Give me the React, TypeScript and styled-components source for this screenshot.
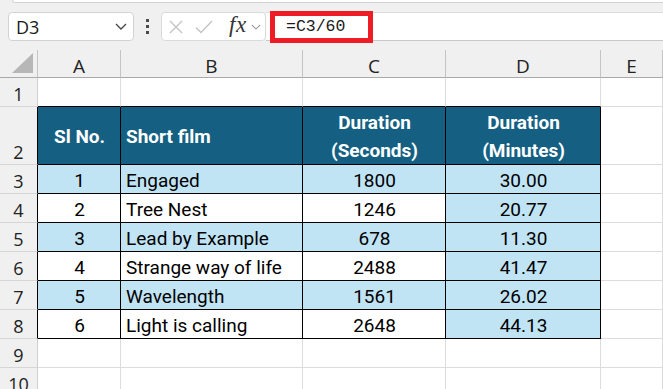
import React from 'react';
import styled, { createGlobalStyle } from 'styled-components';

const GlobalStyle = createGlobalStyle`
  html, body {
    margin: 0;
    padding: 0;
    background: #f0f0f0;
    overflow: hidden;
  }
  #root {
    width: 663px;
    height: 389px;
    overflow: hidden;
  }
`;

const HEAD_BLUE = '#156082';
const LIGHT_BLUE = '#c1e4f5';
const GRID = '#dcdcdc';
const HDR_LINE = '#c4c4c4';

const Window = styled.div`
  width: 663px;
  height: 389px;
  overflow: hidden;
  display: flex;
  flex-direction: column;
  background: #f0f0f0;
  font-family: Roboto, 'Liberation Sans', sans-serif;
  & > * {
    flex-shrink: 0;
  }
`;

const RibbonEdge = styled.div`
  height: 2px;
  margin-left: 12px;
  background: #ffffff;
  border-bottom: 1px solid #d2d2d2;
  border-left: 1px solid #d2d2d2;
  border-bottom-left-radius: 4px;
`;

const FormulaBar = styled.div`
  display: flex;
  align-items: center;
  height: 29px;
  padding: 9px 0 9px 8px;
`;

const NameBox = styled.div`
  width: 126px;
  height: 29px;
  box-sizing: border-box;
  display: flex;
  align-items: center;
  justify-content: space-between;
  padding: 0 6px 0 7px;
  background: #fff;
  border: 1px solid #d3d3d3;
  border-radius: 4px;
  font-family: 'Open Sans', 'Noto Sans', sans-serif;
  font-size: 18px;
  color: #1a1a1a;
`;

const Grip = styled.div`
  width: 27px;
  display: flex;
  flex-direction: column;
  align-items: center;
  gap: 2.5px;
  span {
    width: 3.5px;
    height: 3.5px;
    background: #4a4a4a;
  }
`;

const FxBox = styled.div`
  width: 105px;
  height: 29px;
  box-sizing: border-box;
  display: flex;
  align-items: center;
  padding-left: 6px;
  background: #fff;
  border: 1px solid #dadada;
  border-radius: 4px;
`;

const FxLabel = styled.span`
  font-family: 'Liberation Serif', serif;
  font-style: italic;
  font-size: 23px;
  color: #333;
  margin: -3px 4px 0 16px;
  letter-spacing: 0.5px;
`;

const FormulaField = styled.div`
  position: relative;
  flex: 1;
  height: 29px;
  box-sizing: border-box;
  display: flex;
  align-items: center;
  padding-left: 20px;
  background: #fff;
  border-top: 1px solid #dcdcdc;
  border-bottom: 1px solid #c8c8c8;
  font-family: 'Liberation Mono', 'DejaVu Sans Mono', monospace;
  font-size: 16.5px;
  color: #1a1a1a;
`;

const Highlight = styled.div`
  position: absolute;
  left: 4px;
  top: -2px;
  width: 103px;
  height: 32px;
  box-sizing: border-box;
  border: 5px solid #ee1c25;
`;

const Sheet = styled.div`
  display: grid;
  grid-template-columns: 38px 83px 182px 143px 155px 1fr;
  grid-template-rows: 28px 29px 58px repeat(8, 29px);
  background: #fff;
`;

const ColHead = styled.div`
  display: flex;
  align-items: center;
  justify-content: center;
  padding-top: 4px;
  box-sizing: border-box;
  background: #f0f0f0;
  border-right: 1px solid ${HDR_LINE};
  border-bottom: 1px solid #a9a9a9;
  font-family: 'Open Sans', 'Noto Sans', sans-serif;
  font-size: 19px;
  color: #222;
`;

const Corner = styled.div`
  display: flex;
  align-items: flex-end;
  justify-content: flex-end;
  padding: 0 4px 4px 0;
  box-sizing: border-box;
  background: #f0f0f0;
  border-right: 1px solid ${HDR_LINE};
  border-bottom: 1px solid #a9a9a9;
`;

const RowHead = styled.div<{ $edge?: boolean }>`
  display: flex;
  align-items: flex-end;
  justify-content: center;
  padding-bottom: 0;
  box-sizing: border-box;
  background: #f0f0f0;
  border-right: 1px solid ${({ $edge }) => ($edge ? '#000' : '#cfcfcf')};
  border-bottom: 1px solid #d6d6d6;
  font-family: 'Open Sans', 'Noto Sans', sans-serif;
  font-size: 18px;
  color: #222;
`;

type Fill = 'head' | 'blue' | 'none';

const Cell = styled.div<{
  $fill?: Fill;
  $align?: 'left' | 'center';
  $table?: boolean;
  $topEdge?: boolean;
}>`
  display: flex;
  align-items: flex-end;
  justify-content: ${({ $align }) => ($align === 'left' ? 'flex-start' : 'center')};
  padding: 0 4px 3px 5px;
  box-sizing: border-box;
  white-space: nowrap;
  font-size: 19px;
  line-height: 19px;
  color: #000;
  background: ${({ $fill }) =>
    $fill === 'head' ? HEAD_BLUE : $fill === 'blue' ? LIGHT_BLUE : '#fff'};
  border-right: 1px solid ${({ $table }) => ($table ? '#000' : GRID)};
  border-bottom: 1px solid ${({ $table, $topEdge }) => ($table || $topEdge ? '#000' : GRID)};
`;

const HeadCell = styled(Cell)`
  align-items: center;
  padding-bottom: 0;
  padding-top: 3px;
  color: #fff;
  font-weight: 700;
  text-align: center;
  line-height: 28px;
  white-space: normal;
`;

const rows = [
  [1, 'Engaged', 1800, '30.00'],
  [2, 'Tree Nest', 1246, '20.77'],
  [3, 'Lead by Example', 678, '11.30'],
  [4, 'Strange way of life', 2488, '41.47'],
  [5, 'Wavelength', 1561, '26.02'],
  [6, 'Light is calling', 2648, '44.13'],
];

const Chevron = ({ size = 12, color = '#444' }: { size?: number; color?: string }) => (
  <svg width={size} height={size / 2 + 1} viewBox="0 0 12 7" fill="none">
    <path d="M1 1l5 5 5-5" stroke={color} strokeWidth="1.3" />
  </svg>
);

const CancelIcon = () => (
  <svg width="16" height="16" viewBox="0 0 16 16" fill="none">
    <path d="M2 2l12 12M14 2L2 14" stroke="#c2c2c2" strokeWidth="1.3" />
  </svg>
);

const CheckIcon = () => (
  <svg width="18" height="16" viewBox="0 0 18 16" fill="none" style={{ marginLeft: 11 }}>
    <path d="M1 8.5l5 5L17 2" stroke="#c2c2c2" strokeWidth="1.3" />
  </svg>
);

const SelectAll = () => (
  <svg width="21" height="20" viewBox="0 0 21 20">
    <polygon points="21,0 21,20 0,20" fill="#b7b7b7" />
  </svg>
);

export default function App() {
  const letters = ['A', 'B', 'C', 'D', 'E'];
  return (
    <>
      <GlobalStyle />
      <Window>
        <RibbonEdge />
        <FormulaBar>
          <NameBox>
            D3
            <Chevron />
          </NameBox>
          <Grip>
            <span />
            <span />
            <span />
          </Grip>
          <FxBox>
            <CancelIcon />
            <CheckIcon />
            <FxLabel>fx</FxLabel>
            <Chevron size={10} color="#9a9a9a" />
          </FxBox>
          <FormulaField>
            =C3/60
            <Highlight />
          </FormulaField>
        </FormulaBar>

        <Sheet>
          <Corner>
            <SelectAll />
          </Corner>
          {letters.map((l) => (
            <ColHead key={l}>{l}</ColHead>
          ))}

          <RowHead>1</RowHead>
          {letters.map((l, i) => (
            <Cell key={l} $topEdge={i < 4} />
          ))}

          <RowHead $edge>2</RowHead>
          <HeadCell $fill="head" $table>Sl No.</HeadCell>
          <HeadCell $fill="head" $table $align="left">Short film</HeadCell>
          <HeadCell $fill="head" $table>Duration<br />(Seconds)</HeadCell>
          <HeadCell $fill="head" $table>Duration<br />(Minutes)</HeadCell>
          <Cell />

          {rows.map((r, i) => {
            const fill: Fill = i % 2 === 0 ? 'blue' : 'none';
            return (
              <React.Fragment key={r[0]}>
                <RowHead $edge>{i + 3}</RowHead>
                <Cell $fill={fill} $table>{r[0]}</Cell>
                <Cell $fill={fill} $table $align="left">{r[1]}</Cell>
                <Cell $fill={fill} $table>{r[2]}</Cell>
                <Cell $fill="blue" $table>{r[3]}</Cell>
                <Cell />
              </React.Fragment>
            );
          })}

          {[9, 10].map((n) => (
            <React.Fragment key={n}>
              <RowHead>{n}</RowHead>
              {letters.map((l) => (
                <Cell key={l} />
              ))}
            </React.Fragment>
          ))}
        </Sheet>
      </Window>
    </>
  );
}
